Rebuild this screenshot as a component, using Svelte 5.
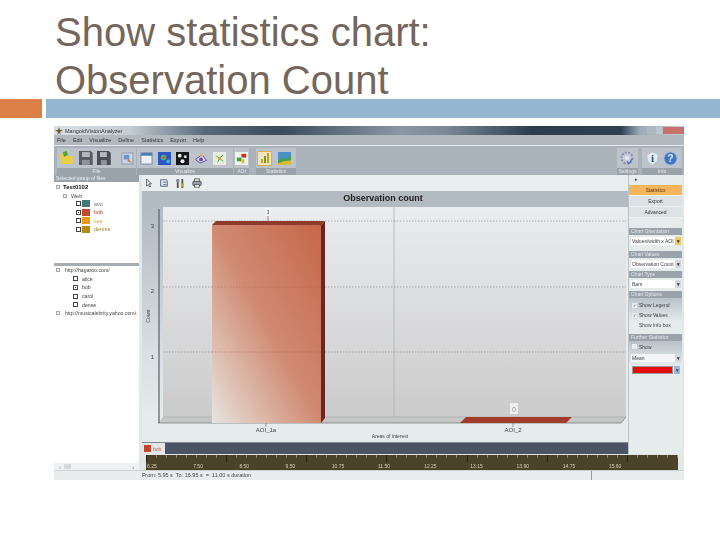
<script>
  const menus = ['File', 'Edit', 'Visualize', 'Define', 'Statistics', 'Export', 'Help'];
  const files = [
    { name: 'avo', color: '#3f7a78', text: '#777', on: false },
    { name: 'bob', color: '#c2492c', text: '#a8452c', on: true },
    { name: 'cee', color: '#ec9a12', text: '#d99a30', on: false },
    { name: 'dennis', color: '#b88a10', text: '#a07c20', on: false }
  ];
  const users = [
    { name: 'alice', on: false },
    { name: 'bob', on: true },
    { name: 'carol', on: false },
    { name: 'dense', on: false }
  ];
  const times = ['6.25', '7.50', '8.50', '9.50', '10.75', '11.50', '12.25', '13.15', '13.90', '14.75', '15.60'];
  const ticks = Array.from({ length: 54 }, (_, i) => i);
</script>

<div class="slide">
  <h1>Show statistics chart:<br />Observation Count</h1>
  <div class="rule"><span class="orange"></span><span class="blue"></span></div>

  <div class="window">
    <div class="titlebar">
      <svg class="logo" viewBox="0 0 8 8"><path d="M4 0 5 3 8 3 5 5 6 8 4 6 2 8 3 5 0 3 3 3Z" fill="#6b5a2a" /></svg>
      <span>MangoldVisionAnalyzer</span>
      <div class="controls"><i class="min"></i><i class="max"></i><i class="close"></i></div>
    </div>
    <div class="menubar">
      {#each menus as m}<span>{m}</span>{/each}
    </div>

    <div class="ribbon">
      <div class="group file">
        <div class="icons">
          <svg viewBox="0 0 16 16" width="16" height="16"><path d="M1 4h5l2 2h6v8H2Z" fill="#e8cf45" /><path d="M4 2 8 1 9 5 5 7Z" fill="#58a02c" /></svg>
          <svg viewBox="0 0 16 16" width="16" height="16"><path d="M1 1h12l2 2v12H1Z" fill="#5a5d64" /><rect x="4" y="2" width="8" height="5" fill="#b4b8be" /><rect x="4" y="10" width="8" height="5" fill="#8e9299" /></svg>
          <svg viewBox="0 0 16 16" width="16" height="16"><path d="M1 1h12l2 2v12H1Z" fill="#4a4d55" /><rect x="4" y="2" width="7" height="5" fill="#b4b8be" /><rect x="5" y="10" width="6" height="5" fill="#8e9299" /></svg>
          <svg class="wide" viewBox="0 0 14 14" width="13" height="13"><rect x="1" y="1" width="12" height="12" fill="#c9d4e4" stroke="#8c9bb0" /><path d="M3 3h6v5H3Z" fill="#6d94c4" /><path d="M8 7l4 5-5-2Z" fill="#c27a5a" /></svg>
        </div>
        <label>File</label>
      </div>
      <div class="group vis">
        <div class="icons">
          <svg viewBox="0 0 14 14" width="13" height="13"><rect x="1" y="1" width="12" height="12" fill="#eef2f6" stroke="#6b86a8" /><rect x="1" y="1" width="12" height="3" fill="#4f7db4" /></svg>
          <svg viewBox="0 0 14 14" width="13" height="13"><rect width="14" height="14" fill="#2e55c4" /><circle cx="6" cy="6" r="3" fill="#3cc06a" /><circle cx="6" cy="6" r="1.4" fill="#e84a2a" /><circle cx="11" cy="10" r="2" fill="#38b8d0" /></svg>
          <svg viewBox="0 0 14 14" width="13" height="13"><rect width="14" height="14" fill="#16161a" /><circle cx="4" cy="4" r="2" fill="#eee" /><circle cx="10" cy="5" r="1.6" fill="#ddd" /><circle cx="7" cy="10" r="2.2" fill="#f4f4f4" /></svg>
          <svg viewBox="0 0 14 14" width="14" height="13"><path d="M1 8 8 3 13 9 6 12Z" fill="#d9d3ee" stroke="#5a4aa0" /><circle cx="7" cy="8" r="2" fill="#6a4aa8" /><path d="M7 1 10 4 6 5Z" fill="#e8b23a" /></svg>
          <svg viewBox="0 0 14 14" width="13" height="13"><rect width="14" height="14" fill="#e6eee2" /><path d="M3 4 7 7 11 3M7 7 5 11M7 7 11 10" stroke="#5ca03c" fill="none" /><circle cx="7" cy="7" r="1.5" fill="#d0a020" /></svg>
        </div>
        <label>Visualize</label>
      </div>
      <div class="group aoi">
        <div class="icons">
          <svg viewBox="0 0 14 14" width="13" height="13"><rect width="14" height="14" fill="#f0f2ec" /><rect x="7" y="2" width="5" height="4" fill="#d42a22" /><rect x="2" y="6" width="5" height="4" fill="#3fa43a" /><rect x="7" y="8" width="3" height="4" fill="#e8b820" /></svg>
        </div>
        <label>AOI</label>
      </div>
      <div class="group stats">
        <div class="icons">
          <div class="selected"><svg viewBox="0 0 12 12" width="12" height="12"><rect x="2" y="7" width="2" height="4" fill="#d8a020" /><rect x="5" y="4" width="2" height="7" fill="#5aa03c" /><rect x="8" y="1" width="2" height="10" fill="#c8a020" /></svg></div>
          <svg viewBox="0 0 14 14" width="13" height="13"><rect width="14" height="14" fill="#4a90c8" /><path d="M0 14V9L5 6 9 8 14 3V14Z" fill="#4aa04a" /><path d="M0 14V12L6 10 14 9V14Z" fill="#d8b838" /></svg>
        </div>
        <label>Statistics</label>
      </div>
      <div class="spacer"></div>
      <div class="group settings">
        <div class="icons">
          <svg viewBox="0 0 16 16" width="16" height="16"><circle cx="8" cy="8" r="5.5" fill="#c6cad8" stroke="#8a90a8" stroke-width="2" stroke-dasharray="2 1.3" /><circle cx="8" cy="8" r="2" fill="#e8eaf0" /><path d="M8 11l2 3 3-5" stroke="#3a58a8" fill="none" /></svg>
        </div>
        <label>Settings</label>
      </div>
      <div class="group info">
        <div class="icons">
          <svg viewBox="0 0 16 16" width="15" height="15"><path d="M8 1 14 4 13 11 8 15 3 11 2 4Z" fill="#e6eaf2" stroke="#c0c6d4" /><text x="8" y="12" text-anchor="middle" class="i">i</text></svg>
          <svg viewBox="0 0 16 16" width="15" height="15"><circle cx="8" cy="8" r="7" fill="#3d78c4" /><circle cx="8" cy="8" r="7" fill="none" stroke="#a8bcd8" /><text x="8" y="12" text-anchor="middle" class="q">?</text></svg>
        </div>
        <label>Info</label>
      </div>
    </div>

    <div class="body">
      <aside class="left">
        <div class="lefthead">Selected group of files</div>
        <div class="tree top">
          <div class="node root bold"><b class="exp"></b>Test0102</div>
          <div class="node lvl1"><b class="exp"></b>Web</div>
          {#each files as f}
            <div class="node lvl2">
              <i class="cb" class:on={f.on}></i><i class="swatch" style:background={f.color}></i>
              <span style:color={f.text}>{f.name}</span>
            </div>
          {/each}
        </div>
        <div class="splitter"></div>
        <div class="tree bottom">
          <div class="node root"><b class="exp"></b>http://hagaroo.com/</div>
          {#each users as u}
            <div class="node lvl3"><i class="cb" class:on={u.on}></i><span>{u.name}</span></div>
          {/each}
          <div class="node root"><b class="exp"></b>http://musicalebrity.yahoo.com/.</div>
        </div>
        <div class="hscroll"><span>‹</span><i></i><span>›</span></div>
      </aside>

      <div class="work">
        <div class="panes">
          <main class="center">
            <div class="tools">
              <svg viewBox="0 0 10 12" width="8" height="10"><path d="M2 1v9l2-2 2 3 1-1-2-3h3Z" fill="#fff" stroke="#444" /></svg>
              <svg viewBox="0 0 12 12" width="10" height="10"><path d="M2 2h7l1 2v6H2Z" fill="#dfe6ee" stroke="#4a5a70" /><path d="M5 5h4M5 8h4" stroke="#4a5a70" /></svg>
              <svg viewBox="0 0 12 12" width="11" height="11"><path d="M3 1v10M8 1v10" stroke="#555" stroke-width="2" /><circle cx="3" cy="3" r="2" fill="#8a8f98" /><rect x="6.5" y="6" width="3" height="4" fill="#c8a040" /></svg>
              <svg viewBox="0 0 12 12" width="10" height="10"><rect x="3" y="1" width="6" height="4" fill="#eee" stroke="#555" /><rect x="1" y="4" width="10" height="5" rx="1" fill="#9aa0aa" stroke="#444" /><rect x="3" y="8" width="6" height="3" fill="#fff" stroke="#555" /></svg>
            </div>
            <div class="charttitle">Observation count</div>
            <svg class="chart" viewBox="0 0 486 236" width="486" height="236">
              <defs>
                <linearGradient id="strip" x1="0" y1="0" x2="0" y2="1">
                  <stop offset="0" stop-color="#b2bac2" /><stop offset="0.7" stop-color="#d9dfe3" /><stop offset="1" stop-color="#e6ebeb" />
                </linearGradient>
                <linearGradient id="wall" x1="0" y1="0" x2="0" y2="1">
                  <stop offset="0" stop-color="#ebecef" /><stop offset="1" stop-color="#cbcbcb" />
                </linearGradient>
                <linearGradient id="bar" x1="1" y1="0" x2="0" y2="1">
                  <stop offset="0" stop-color="#c6674a" /><stop offset="0.5" stop-color="#d08a72" /><stop offset="0.82" stop-color="#dfc3b6" /><stop offset="1" stop-color="#e6e4e2" />
                </linearGradient>
              </defs>
              <rect width="486" height="236" fill="#e6ebeb" />
              <rect width="21" height="211" fill="url(#strip)" />
              <rect y="0" width="486" height="1" fill="#b2bac2" />
              <rect x="21" y="1" width="463" height="210" fill="url(#wall)" />
              <path d="M21 211H484L479 217H16Z" fill="#c6c6c6" />
              <path d="M16 217H479L484 211" fill="none" stroke="#7a7f84" stroke-width="0.8" />
              <path d="M17 3V217" stroke="#5a5f66" stroke-width="1.2" />
              <path d="M252 1V211" stroke="#b0b2b4" stroke-width="0.8" />
              <path d="M21 211H484" stroke="#a8aaac" stroke-width="0.6" />
              <path d="M21 15H484M21 81H484M21 146H484" stroke="#808386" stroke-dasharray="1.5 1.5" stroke-width="0.6" />
              <path d="M70 19 74 15H183L179 19Z" fill="#8e3a2c" />
              <path d="M179 19 183 15V212L179 217Z" fill="#6a2622" />
              <rect x="70" y="19" width="109" height="198" fill="url(#bar)" />
              <path d="M70 81H179M70 146H179" stroke="#9a5a48" stroke-dasharray="1.5 1.5" stroke-width="0.4" />
              <path d="M126 9V15" stroke="#a0857c" />
              <rect x="123" y="2" width="6" height="8" fill="#f4f4f4" />
              <text x="126" y="8" class="t5" text-anchor="middle">3</text>
              <path d="M318 217 324 211H430L424 217Z" fill="#a33b2b" />
              <rect x="368" y="197" width="8" height="11" fill="#eee" />
              <text x="372" y="206" class="t7" text-anchor="middle">0</text>
              <text x="12" y="22" class="t6" text-anchor="end">3</text>
              <text x="12" y="87" class="t6" text-anchor="end">2</text>
              <text x="12" y="153" class="t6" text-anchor="end">1</text>
              <text transform="translate(8 110) rotate(-90)" class="t5" text-anchor="middle">Count</text>
              <path d="M124 217V221M371 217V221" stroke="#777" stroke-width="0.7" />
              <text x="124" y="225.500" class="t6" text-anchor="middle">AOI_1a</text>
              <text x="371" y="225.500" class="t6" text-anchor="middle">AOI_2</text>
              <text x="248" y="232" class="t5" text-anchor="middle">Areas of interest</text>
            </svg>
            <div class="legend"><div class="item"><i></i><span>bob</span></div></div>
          </main>

          <aside class="right">
            <div class="collapse">▸</div>
            <div class="tab active">Statistics</div>
            <div class="tab">Export</div>
            <div class="tab">Advanced</div>

            <div class="head first">Chart Orientation</div>
            <div class="select yellow"><span>Values/width x AOI</span><b>▾</b></div>
            <div class="head">Chart Values</div>
            <div class="select"><span>Observation Count</span><b>▾</b></div>
            <div class="head">Chart Type</div>
            <div class="select"><span>Bars</span><b>▾</b></div>
            <div class="head">Chart Options</div>
            <div class="options">
              <div class="opt"><i>✓</i>Show Legend</div>
              <div class="opt"><i>✓</i>Show Values</div>
              <div class="opt"><i></i>Show Info box</div>
            </div>
            <div class="head">Further Statistics</div>
            <div class="options further">
              <div class="opt"><i></i>Show</div>
              <div class="select light"><span>Mean</span><b>▾</b></div>
              <div class="colorpick"><i></i><b>▾</b></div>
            </div>
          </aside>
        </div>

        <div class="timeline">
          <div class="ticks">
            {#each ticks as t}<i class:major={t % 8 === 0}></i>{/each}
          </div>
          <div class="labels">
            {#each times as t}<span>{t}</span>{/each}
          </div>
        </div>
      </div>
    </div>

    <div class="status">
      <span class="msg">From: 5.95 s  To: 16.95 s  =  11.00 s duration</span>
      <span class="last"></span>
    </div>
  </div>
</div>

<style>
  :global(body) { margin: 0; background: #fff; }
  .slide { width: 720px; height: 540px; overflow: hidden; background: #fff; font-family: "Liberation Sans", Arial, sans-serif; }
  h1 { margin: 0; height: 99px; box-sizing: border-box; padding: 8px 0 0 55px; font-weight: 400; font-size: 40px; line-height: 48px; color: #75665c; }
  .rule { display: flex; gap: 4px; height: 19px; }
  .orange { width: 42px; background: #dd8047; }
  .blue { flex: 1; background: #94b6d2; }

  .window { margin: 8px 36px 0 54px; height: 354px; display: flex; flex-direction: column; background: #e2e8ea; filter: blur(0.4px); font-size: 5.5px; color: #444; }
  .titlebar { height: 9px; display: flex; align-items: center; gap: 2px; background: linear-gradient(90deg, #d7dfe4 0, #c3ccd3 12%, #59697a 24%, #3b4a5c 36%, #8b97a3 55%, #7c8995 62%, #2c3d50 76%, #2f4053 90%, #9cabb8 93%, #c8d0d6 100%); color: #333; padding-left: 1px; }
  .logo { width: 8px; height: 8px; }
  .controls { margin-left: auto; display: flex; height: 7px; gap: 1px; }
  .controls i { display: block; width: 8px; background: #aeb8c2; }
  .controls .max { width: 6px; background: #bcc4cc; }
  .controls .close { width: 21px; background: #c9706a; }
  .menubar { height: 11px; display: flex; align-items: center; gap: 7px; padding-left: 3px; background: #b2b9be; border-bottom: 1px solid #e6eaec; box-sizing: border-box; color: #333; }

  .ribbon { height: 29px; display: flex; gap: 1px; padding: 2px 0 0 3px; box-sizing: border-box; background: #aab3bc; }
  .group { display: flex; flex-direction: column; background: #bcc3ca; }
  .group .icons { flex: 1; display: flex; align-items: center; gap: 3px; padding: 0 2px; }
  .group label { height: 7px; line-height: 7px; text-align: center; background: #9aa2aa; color: #e8ecef; font-size: 5px; }
  .file { width: 79px; }
  .file .wide { margin-left: 6px; }
  .vis { width: 96px; }
  .vis .icons { gap: 5px; padding-left: 3px; }
  .aoi { width: 15px; }
  .aoi .icons { padding: 0 1px; }
  .stats { width: 40px; margin-left: 6px; }
  .stats .icons { gap: 6px; padding: 0 1px; }
  .selected { width: 15px; height: 15px; display: flex; align-items: center; justify-content: center; background: #f0e4b8; border: 1px solid #d8b050; box-sizing: border-box; }
  .spacer { flex: 1; }
  .settings { width: 21px; }
  .info { width: 40px; margin: 0 2px 0 3px; }
  .info .icons { gap: 3px; padding: 0 3px; }
  .i { font: 700 12px "Liberation Serif", serif; fill: #2a4a90; }
  .q { font: 700 11px "Liberation Sans", sans-serif; fill: #dfe8f4; }

  .body { flex: 1; min-height: 0; display: flex; }
  .left { width: 85px; margin-right: 3px; display: flex; flex-direction: column; background: #fff; }
  .lefthead { height: 7px; line-height: 7px; padding-left: 2px; background: #9aa2aa; color: #eef0f2; font-size: 5px; }
  .tree { display: flex; flex-direction: column; }
  .top { height: 80px; padding-top: 1px; }
  .bottom { flex: 1; }
  .node { height: 8.4px; display: flex; align-items: center; gap: 2px; white-space: nowrap; color: #444; }
  .bottom .node { height: 8.6px; font-size: 5.2px; }
  .root { padding-left: 2px; gap: 5px; }
  .root.bold { font-weight: 700; color: #111; font-size: 6px; gap: 3px; }
  .lvl1 { padding-left: 9px; gap: 4px; }
  .lvl2 { padding-left: 22px; gap: 1px; }
  .lvl2 span { margin-left: 3px; }
  .lvl3 { padding-left: 19px; gap: 4px; }
  .exp { display: block; width: 4px; height: 4px; border: 1px solid #aaa; box-sizing: border-box; background: #eee; }
  .cb { display: block; width: 5px; height: 5px; border: 1px solid #444; box-sizing: border-box; background: #fff; }
  .cb.on { background: #333; box-shadow: inset 0 0 0 1px #fff; }
  .swatch { display: block; width: 8px; height: 7px; }
  .splitter { height: 3px; background: #a8adb2; }
  .hscroll { height: 7px; display: flex; align-items: center; justify-content: space-between; padding: 0 5px; background: #eef1f2; color: #777; }
  .hscroll i { display: block; width: 7px; height: 5px; background: #d4d8dc; margin-right: auto; margin-left: 3px; }

  .work { flex: 1; min-width: 0; display: flex; flex-direction: column; }
  .panes { display: flex; height: 279px; }
  .center { width: 486px; display: flex; flex-direction: column; }
  .tools { height: 16px; display: flex; align-items: center; gap: 6px; padding-left: 3px; box-sizing: border-box; background: #e9efee; }
  .charttitle { height: 15px; line-height: 14px; text-align: center; font-size: 9px; font-weight: 700; color: #222; background: #b2bac2; box-sizing: border-box; padding-right: 4px; }
  .chart { display: block; width: 486px; height: 236px; }
  .t5 { font-size: 5px; fill: #444; }
  .t6 { font-size: 6px; fill: #444; }
  .t7 { font-size: 7px; fill: #999; }
  .legend { height: 12px; background: #4b5464; border-top: 1px solid #828a96; box-sizing: border-box; }
  .item { display: flex; align-items: center; gap: 2px; width: 23px; height: 11px; box-sizing: border-box; padding-left: 2px; background: #e6e6e6; color: #b5654f; font-size: 5px; }
  .item i { display: block; width: 7px; height: 7px; background: #c5452a; }

  .right { flex: 1; margin-right: 2px; display: flex; flex-direction: column; align-items: stretch; background: #e6ecec; border-left: 1px solid #bcc4ca; box-sizing: border-box; }
  .collapse { height: 10px; line-height: 9px; text-align: center; font-size: 5px; color: #444; padding-right: 38px; box-sizing: border-box; }
  .tab { height: 11px; line-height: 11px; text-align: center; font-size: 5px; color: #333; background: #dde3e5; border-bottom: 1px solid #f0f3f3; box-sizing: border-box; }
  .tab.active { background: #f6b45c; color: #5a3a10; }
  .head { height: 7px; line-height: 7px; padding-left: 2px; background: #9aa2aa; color: #e4e8ea; font-size: 5px; margin-top: 2px; }
  .head.first { margin-top: 10px; }
  .select { display: flex; align-items: center; height: 8px; margin: 2px 1px 1px 2px; background: #fff; color: #444; font-size: 5px; overflow: hidden; white-space: nowrap; }
  .select span { flex: 1; padding-left: 1px; overflow: hidden; }
  .select b { width: 6px; height: 100%; font-size: 5px; line-height: 8px; text-align: center; background: #d6dade; color: #333; }
  .select.yellow { margin-bottom: 4px; }
  .select.yellow b { background: #eec860; }
  .select.light { background: #f4f5f6; margin: 3px 1px 4px 2px; }
  .options { display: flex; flex-direction: column; padding: 2px 0; background: linear-gradient(#b9c1c9, #e6ecec 70%); }
  .opt { height: 10px; display: flex; align-items: center; gap: 2px; padding-left: 3px; color: #444; font-size: 5px; }
  .opt i { display: block; width: 5px; height: 5px; background: #e8edf0; color: #345; font-style: normal; font-size: 4px; line-height: 5px; text-align: center; }
  .further { padding-top: 1px; }
  .further .opt { height: 9px; }
  .colorpick { display: flex; gap: 1px; height: 8px; margin: 0 2px 0 3px; }
  .colorpick i { flex: 1; display: block; background: #e60c0c; border: 1px solid #999; box-sizing: border-box; }
  .colorpick b { width: 6px; background: #9cbad8; font-size: 5px; line-height: 8px; text-align: center; }

  .timeline { height: 15px; margin: 1px 6px 0 4px; background: #4a4229; overflow: hidden; flex: none; }
  .ticks { display: flex; justify-content: space-between; height: 5px; }
  .ticks i { display: block; width: 1px; height: 3px; background: #8a8262; }
  .ticks .major { height: 7px; background: #26220f; }
  .labels { display: flex; margin-top: 3px; color: #d8d2b8; font-size: 5px; padding-left: 1px; }
  .labels span { width: 46.2px; flex: none; }
  .status { height: 10px; display: flex; flex: none; background: #e8eced; border-top: 1px solid #cdd0d0; box-sizing: border-box; color: #444; font-size: 5.5px; }
  .msg { flex: 1; padding-left: 88px; white-space: pre; line-height: 8px; }
  .last { width: 92px; border-left: 1px solid #999; }
</style>
